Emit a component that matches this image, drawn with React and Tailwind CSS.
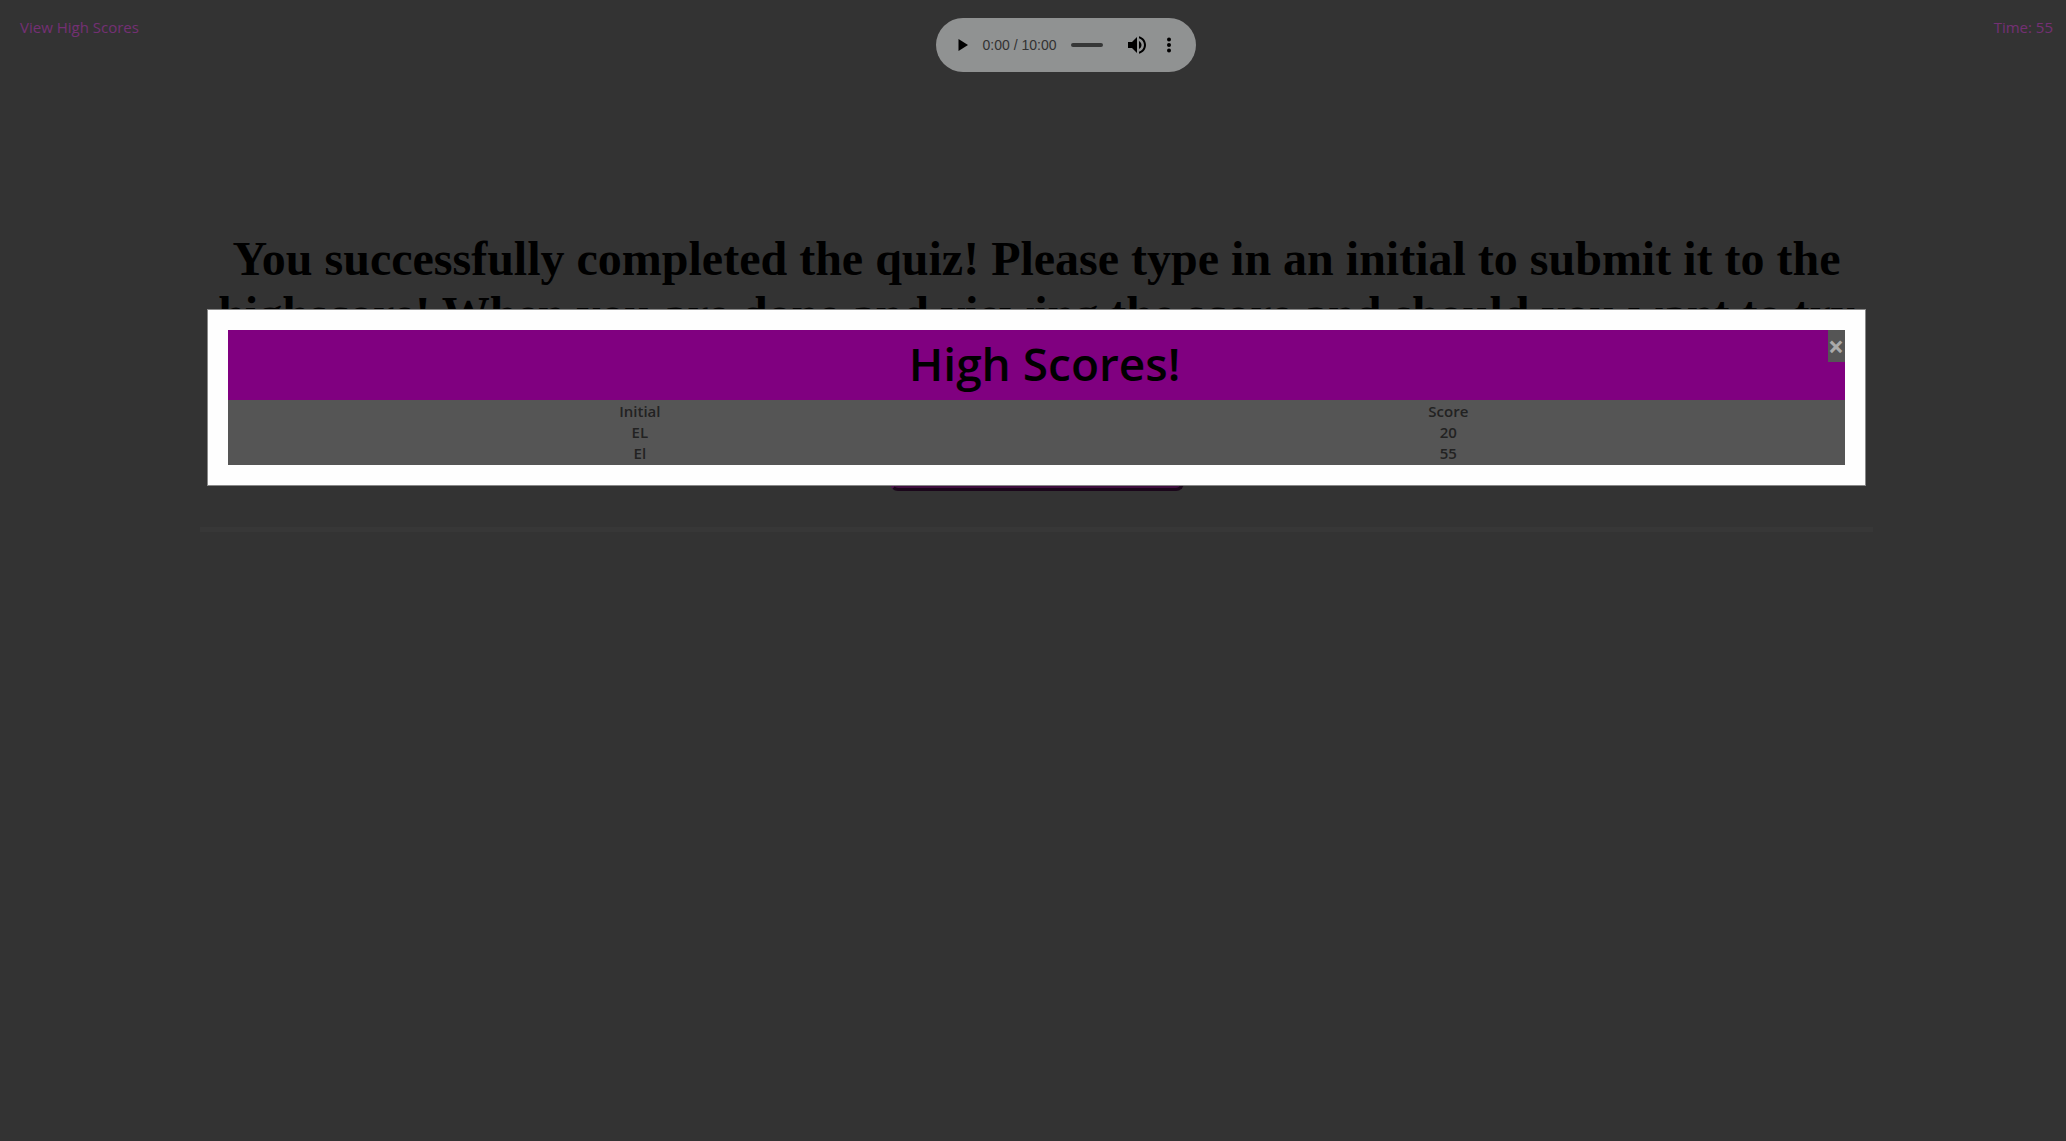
import React from "react";

const scores = [
  { initial: "EL", score: 20 },
  { initial: "El", score: 55 },
];

function AudioPlayer() {
  return (
    <div className="flex h-[54px] w-[260px] items-center rounded-full bg-[#f1f3f4] px-[15px]">
      <button aria-label="Play" className="flex w-[24px] justify-center">
        <svg width="24" height="24" viewBox="0 0 24 24"><path d="M7.500 6v12l9.500-6z" fill="#000" /></svg>
      </button>
      <span className="ml-[8px] w-[84px] whitespace-nowrap font-['Liberation_Sans',sans-serif] text-[14px] leading-[20px] text-[#555]">0:00 / 10:00</span>
      <div className="ml-[7px] h-[4px] w-[32px] rounded-full bg-[#5a5d5c]" />
      <button aria-label="Mute" className="ml-[22px]">
        <svg width="24" height="24" viewBox="0 0 24 24">
          <path d="M3 9v6h4l5 5V4L7 9H3zm13.500 3c0-1.770-1.020-3.290-2.500-4.030v8.050c1.480-.730 2.500-2.250 2.500-4.020zM14 3.230v2.060c2.890.860 5 3.540 5 6.710s-2.110 5.850-5 6.710v2.060c4.010-.910 7-4.490 7-8.770s-2.990-7.860-7-8.770z" fill="#000" />
        </svg>
      </button>
      <button aria-label="More options" className="ml-[8px]">
        <svg width="24" height="24" viewBox="0 0 24 24"><g fill="#000"><circle cx="12" cy="6.500" r="2" /><circle cx="12" cy="12" r="2" /><circle cx="12" cy="17.500" r="2" /></g></svg>
      </button>
    </div>
  );
}

export default function App() {
  return (
    <div className="min-h-screen bg-[#555] font-['Open_Sans',sans-serif] text-[16px] leading-[21px]">
      <header className="flex items-start justify-between pl-[20px] pr-[13px] pt-[18px]">
        <a href="#scores" className="-mt-[1px] w-[178px] text-[15px] text-[#c050c0]">View High Scores</a>
        <AudioPlayer />
        <div className="-mt-[1px] w-[120px] text-right text-[15px] text-[#c050c0]">Time: 55</div>
      </header>
      <main className="ml-[200px] mr-[193px] pt-[159px] text-center">
        <h1 className="px-[10px] font-['Liberation_Serif',serif] text-[48px] font-bold leading-[55px] text-black">
          You successfully completed the quiz! Please type in an initial to submit it to the highscore! When you are done and viewing the score and should you want to try again
        </h1>
        <button className="mt-[46px] h-[49px] w-[294px] rounded-[8px] border-[3px] border-[#802080] bg-[#6a1a6a] [border-style:outset]">Submit</button>
        <hr className="mt-[36px] h-[5px] border-0 bg-[#5c5c5c]" />
      </main>

      <div className="fixed inset-0 bg-black/40 pt-[309px]">
        <section role="dialog" aria-labelledby="scores-title" className="ml-[10%] w-[80.3%] border border-[#888] bg-[#fefefe] p-[20px]">
          <div className="flex h-[70px] items-start bg-[purple] pl-[34px]">
            <h2 id="scores-title" className="flex-1 text-center text-[46px] font-semibold leading-[66px] text-black">High Scores!</h2>
            <button aria-label="Close" className="h-[32px] w-[17px] bg-[#555] text-[28px] font-bold leading-[32px] text-[#aaa]">×</button>
          </div>
          <div className="overflow-hidden bg-[#555] pb-[1px] pt-[1px]">
            <table className="ml-[8px] w-full table-fixed border-collapse text-center text-[15px] font-semibold leading-[21px] text-[#222]">
              <thead>
                <tr><th className="font-semibold">Initial</th><th className="font-semibold">Score</th></tr>
              </thead>
              <tbody>
                {scores.map((s) => (
                  <tr key={s.initial}><td>{s.initial}</td><td>{s.score}</td></tr>
                ))}
              </tbody>
            </table>
          </div>
        </section>
      </div>
    </div>
  );
}
